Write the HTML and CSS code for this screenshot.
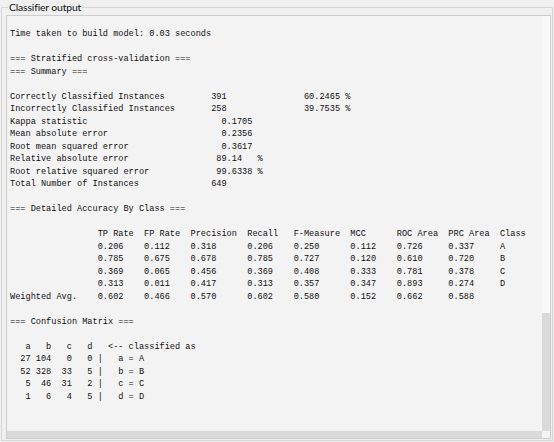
FILE: index.html
```html
<!DOCTYPE html>
<html>
<head>
<meta charset="utf-8">
<link rel="stylesheet" href="styles.css">
</head>
<body>
<fieldset class="group">
<legend class="title">Classifier output</legend>
<div class="pane">
<pre class="out">
Time taken to build model: 0.03 seconds

=== Stratified cross-validation ===
=== Summary ===

Correctly Classified Instances         391               60.2465 %
Incorrectly Classified Instances       258               39.7535 %
Kappa statistic                          0.1705
Mean absolute error                      0.2356
Root mean squared error                  0.3617
Relative absolute error                 89.14   %
Root relative squared error             99.6338 %
Total Number of Instances              649     

=== Detailed Accuracy By Class ===

                 TP Rate  FP Rate  Precision  Recall   F-Measure  MCC      ROC Area  PRC Area  Class
                 0.206    0.112    0.318      0.206    0.250      0.112    0.726     0.337     A
                 0.785    0.675    0.678      0.785    0.727      0.120    0.610     0.720     B
                 0.369    0.065    0.456      0.369    0.408      0.333    0.781     0.378     C
                 0.313    0.011    0.417      0.313    0.357      0.347    0.893     0.274     D
Weighted Avg.    0.602    0.466    0.570      0.602    0.580      0.152    0.662     0.588     

=== Confusion Matrix ===

   a   b   c   d   &lt;-- classified as
  27 104   0   0 |   a = A
  52 328  33   5 |   b = B
   5  46  31   2 |   c = C
   1   6   4   5 |   d = D
</pre>
<div class="vscroll"><div class="vthumb"></div></div>
<div class="hscroll"><div class="hthumb"></div></div>
<div class="corner"></div>
</div>
</fieldset>
</body>
</html>
```
FILE: styles.css
```css
html, body {
  margin: 0;
  padding: 0;
  background: #f0f0f0;
  width: 554px;
  height: 442px;
  overflow: hidden;
}

.group {
  margin: 0 1px 0 1px;
  padding: 1px 1px 1px 4px;
  border: 1px solid #d6d6d6;
  height: 441px;
  box-sizing: border-box;
  min-width: 0;
}

.title {
  font-family: Lato, "Noto Sans", sans-serif;
  font-size: 10.4px;
  letter-spacing: -0.15px;
  line-height: 14px;
  color: #111;
  padding: 0 1px;
  margin-left: 2px;
}

.pane {
  display: grid;
  grid-template-columns: 1fr 8px;
  grid-template-rows: 1fr 7px;
  height: 424px;
  border: 1px solid #cdcdcd;
  background: #f3f3f3;
  box-sizing: border-box;
}

.out {
  margin: 0;
  padding: 12px 0 0 3px;
  font-family: "Liberation Mono", monospace;
  font-size: 8.6px;
  line-height: 12.5px;
  color: #111;
  overflow: hidden;
  white-space: pre;
}

.vscroll {
  display: flex;
  flex-direction: column;
  justify-content: flex-end;
  background: #f8f8f8;
}

.vthumb {
  height: 118px;
  background: #dadada;
}

.hscroll {
  display: flex;
  background: #dadada;
}

.hthumb {
  flex: 1;
}

.corner {
  background: #f3f3f3;
}
```
